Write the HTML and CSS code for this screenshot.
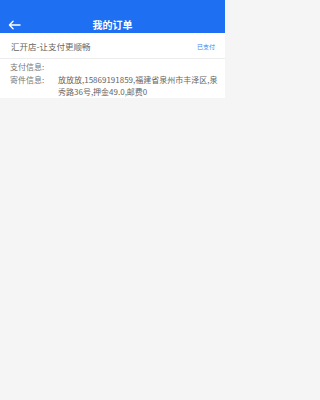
FILE: index.html
```html
<!DOCTYPE html>
<html lang="zh-CN">
<head>
<meta charset="utf-8">
<link rel="stylesheet" href="styles.css">
</head>
<body>
<header class="topbar">
  <svg class="back" viewBox="0 0 14 10" width="13" height="10"><path d="M13 5H1.5M5.5 1L1.5 5l4 4" fill="none" stroke="#fff" stroke-width="1.4" stroke-linecap="round" stroke-linejoin="round"/></svg>
  <h1 class="title">我的订单</h1>
</header>
<section class="store">
  <span class="store-name">汇开店-让支付更顺畅</span>
  <span class="status">已支付</span>
</section>
<section class="info">
  <div class="row"><span class="label">支付信息:</span><span class="value"></span></div>
  <div class="row"><span class="label">寄件信息:</span><span class="value">放放放,15869191859,福建省泉州市丰泽区,泉秀路36号,押金49.0,邮费0</span></div>
</section>
</body>
</html>
```
FILE: styles.css
```css
html, body { margin: 0; padding: 0; }
html { background: #f5f5f5; }
body {
  background: #f5f5f5;
  font-family: "Noto Sans CJK SC", "Noto Sans", sans-serif;
  width: 225px;
  min-height: 400px;
}
.topbar {
  position: relative;
  background: #1f6ff2;
  height: 33px;
  display: flex;
  justify-content: center;
  box-sizing: border-box;
}
.back {
  position: absolute;
  left: 8px;
  top: 20px;
}
.title {
  margin: 0;
  padding-top: 18px;
  color: #fff;
  font-size: 10px;
  font-weight: 700;
  line-height: 14px;
}
.store {
  background: #fff;
  height: 25px;
  display: flex;
  align-items: center;
  justify-content: space-between;
  padding: 1px 10px 0 11px;
  box-sizing: border-box;
  height: 26px;
  border-bottom: 1px solid #ececec;
}
.store-name {
  font-size: 8.5px;
  color: #666;
}
.status {
  font-size: 6px;
  color: #3a7ff0;
}
.info {
  background: #fff;
  padding: 2px 6px 0 10px;
}
.row {
  display: flex;
  font-size: 8px;
  line-height: 12px;
  color: #777;
  min-height: 12px;
}
.row + .row { margin-top: 1px; }
.label {
  flex: 0 0 48px;
}
.value {
  flex: 1;
  color: #666;
}
```
